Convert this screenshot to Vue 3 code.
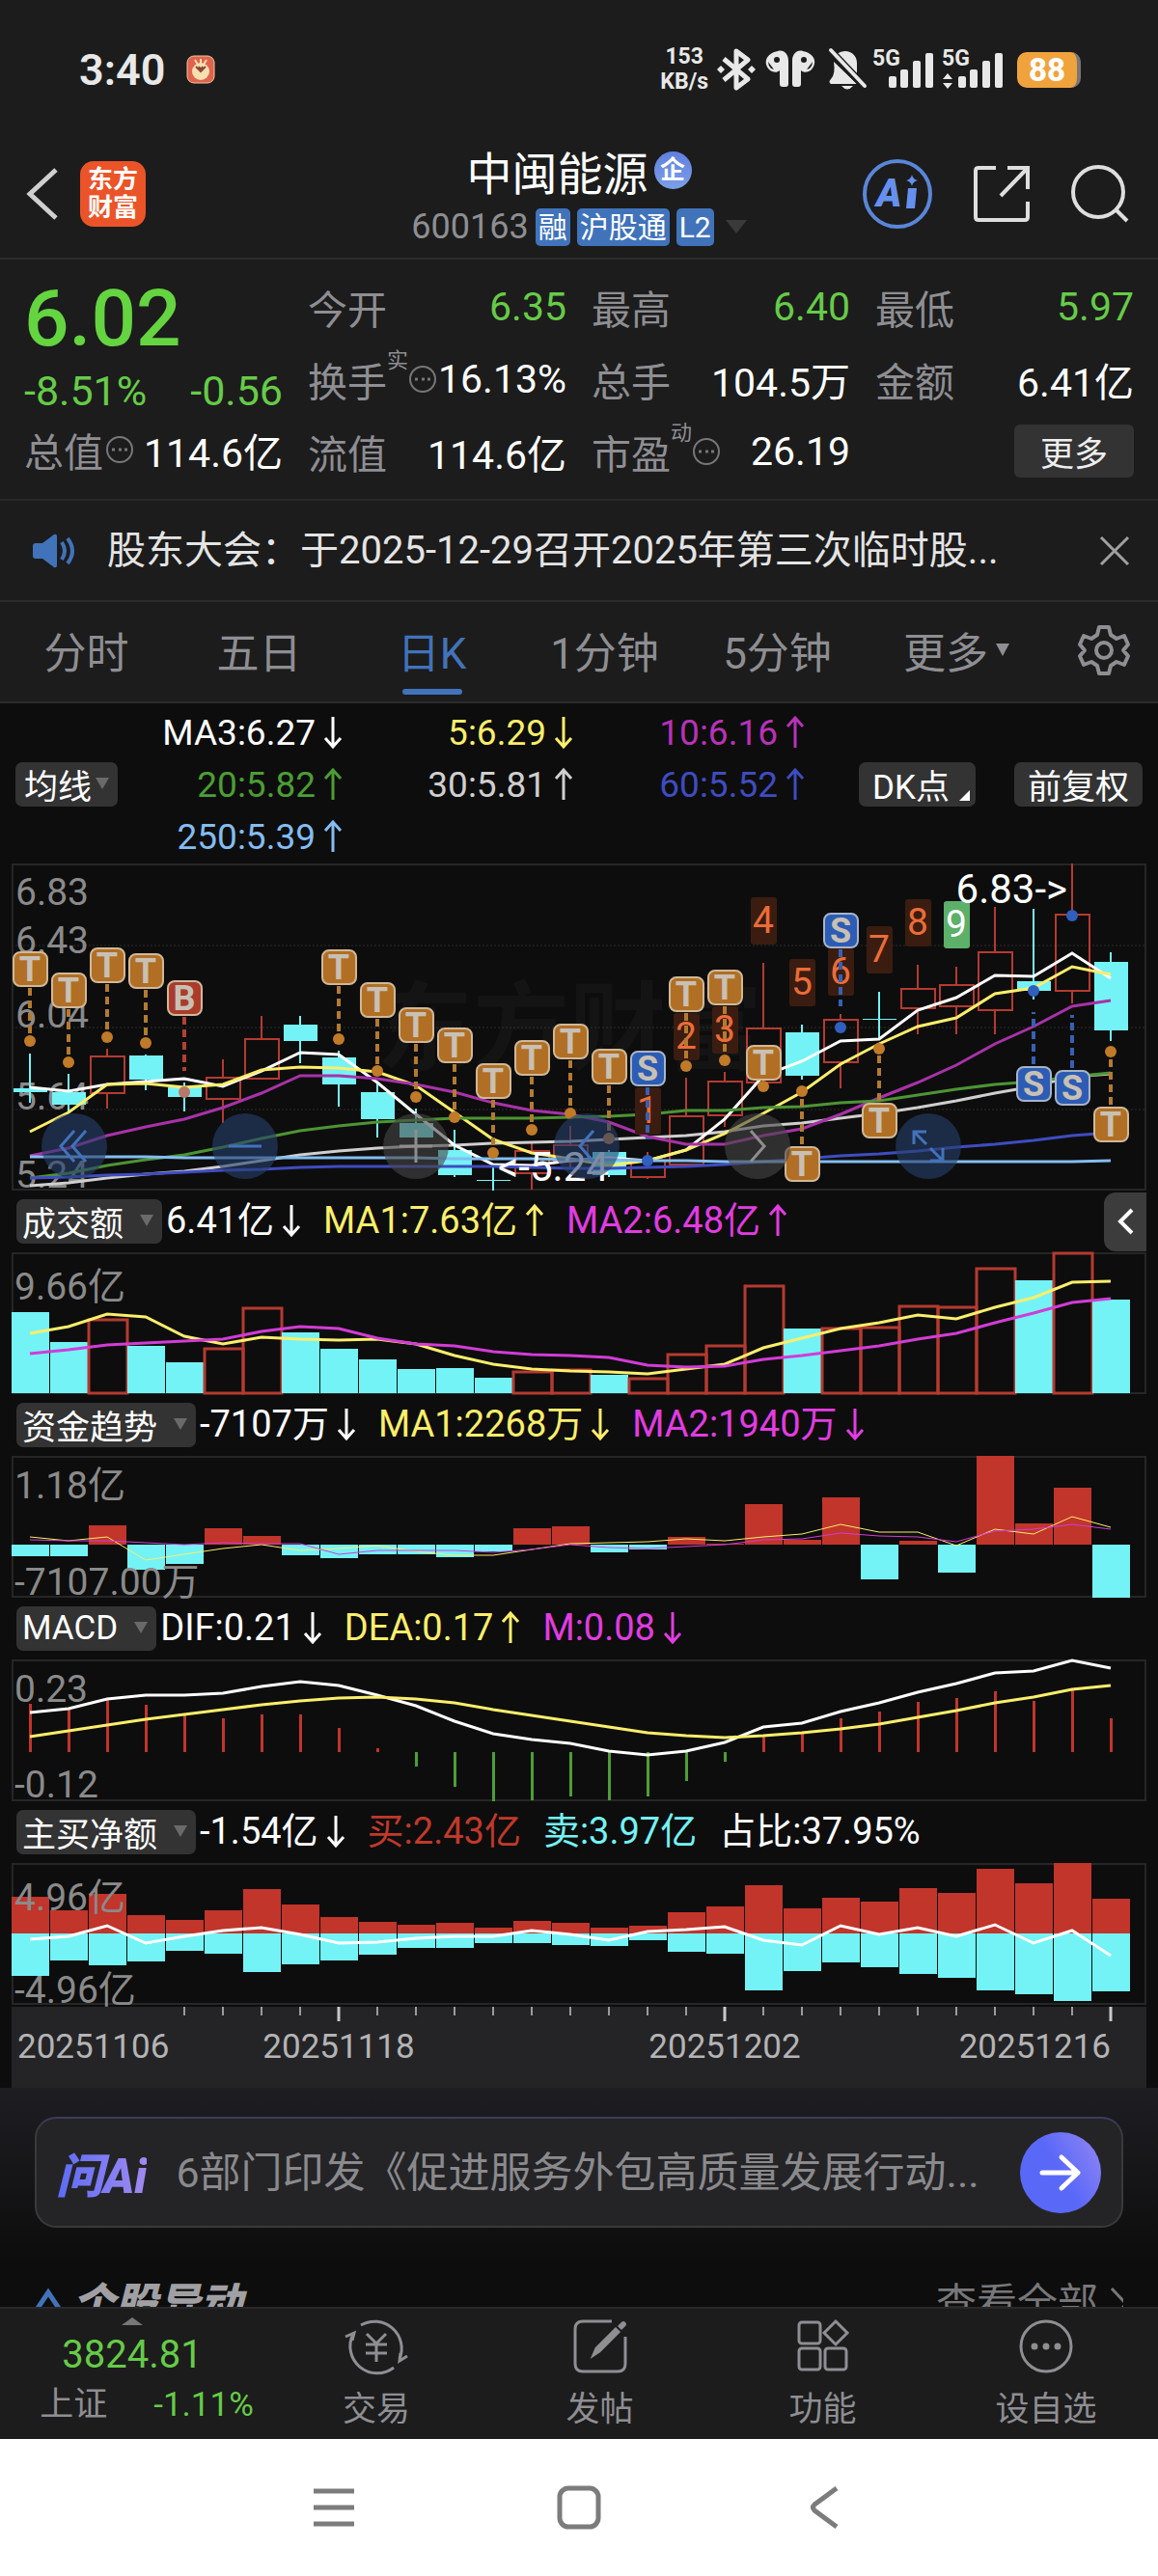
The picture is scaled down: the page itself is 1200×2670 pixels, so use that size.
<template>
  <div class="app">
    <header class="top">
      <div class="status-bar">
        <span class="clock">3:40</span>
        <svg class="alarm" width="30" height="30" viewBox="0 0 30 30">
          <rect x="1" y="1" width="28" height="28" rx="7" fill="#e0634d" stroke="#f0c9a0" />
          <circle cx="15" cy="17" r="9" fill="#f7dfb0" />
          <path d="M9 5l3 5M21 5l-3 5M15 4v5" stroke="#f7dfb0" stroke-width="2" />
          <path d="M10 12l5 5 5-5M13 12l2 3 2-3" fill="none" stroke="#8a4a38" stroke-width="2" />
        </svg>
        <div class="status-right">
          <div class="net-speed"><span>153</span><span>KB/s</span></div>
          <svg width="40" height="44" viewBox="0 0 40 44">
            <path d="M7 11l25 21-12 9V3l12 9L7 33" fill="none" stroke="#e8e8e8" stroke-width="5" stroke-linejoin="round" />
            <path d="M0 22l4-4 4 4-4 4zM32 22l4-4 4 4-4 4z" fill="#e8e8e8" />
          </svg>
          <svg class="pods" width="52" height="40" viewBox="0 0 52 40">
            <g fill="#e8e8e8">
              <path d="M13 1c6-2 11 3 11 10v24q0 3-3 3h-3q-3 0-3-3V21c-3 3-8 2-11-1C-3 12 2 3 13 1z" />
              <path d="M39 1c-6-2-11 3-11 10v24q0 3 3 3h3q3 0 3-3V21c3 3 8 2 11-1 7-8 2-17-9-19z" />
            </g>
            <g fill="#1c1c1c">
              <circle cx="12" cy="10" r="3" />
              <circle cx="40" cy="10" r="3" />
              <path d="M3 12l6 8-3-1q-3-3-3-7zM49 12l-6 8 3-1q3-3 3-7z" />
            </g>
          </svg>
          <svg class="mute" width="40" height="44" viewBox="0 0 40 44">
            <path d="M9 6c10-7 21-1 21 9v13zM6 14l24 23H3q-3-2 0-5 5-5 3-18zM14 39h12q-6 7-12 0z" fill="#e8e8e8" />
            <path d="M2 2l36 38" stroke="#1c1c1c" stroke-width="8" />
            <path d="M3 2l35 37" stroke="#e8e8e8" stroke-width="4" stroke-linecap="round" />
          </svg>
          <svg v-for="n in 2" :key="n" class="signal" width="64" height="42" viewBox="0 0 64 42">
            <text x="0" y="17" font-size="23" font-weight="700" fill="#e8e8e8">5G</text>
            <g fill="#e8e8e8">
              <rect x="17" y="28" width="8" height="12" rx="2" />
              <rect x="29" y="21" width="8" height="19" rx="2" />
              <rect x="42" y="12" width="8" height="28" rx="2" />
              <rect x="55" y="4" width="8" height="36" rx="2" />
              <path v-if="n === 2" d="M1 31l5-6 5 6zM1 35l5 6 5-6z" />
            </g>
          </svg>
          <div class="battery"><span>88</span></div>
        </div>
      </div>

      <div class="title-bar">
        <div class="title-left">
          <button type="button" class="plain" aria-label="返回">
            <svg width="34" height="56" viewBox="0 0 34 56">
              <path d="M31 3L4 28l27 25" fill="none" stroke="#cfcfcf" stroke-width="5" />
            </svg>
          </button>
          <div class="brand"><span>东方</span><span>财富</span></div>
        </div>
        <div class="title-center">
          <h1 class="stock-name">中闽能源<span class="corp">企</span></h1>
          <div class="stock-sub">
            <span class="code">600163</span>
            <span v-for="tag in tags" :key="tag" class="tag">{{ tag }}</span>
            <svg class="sub-tri" width="22" height="14" viewBox="0 0 22 14"><path d="M0 0h22L11 14z" fill="#3a3a3a" /></svg>
          </div>
        </div>
        <div class="title-right">
          <button type="button" class="plain" aria-label="AI">
            <svg width="72" height="72" viewBox="0 0 72 72">
              <circle cx="36" cy="36" r="34" fill="none" stroke="#5a86d8" stroke-width="4" />
              <text x="14" y="49" font-size="40" font-weight="900" font-style="italic" fill="#6590ee">A</text>
              <path d="M47 30h9l-2 21h-9zM51 16q1 5 6 6-5 1-6 6-1-5-6-6 5-1 6-6z" fill="#6590ee" />
            </svg>
          </button>
          <button type="button" class="plain" aria-label="分享">
            <svg width="60" height="60" viewBox="0 0 60 60">
              <path d="M24 3H6Q3 3 3 6v48q0 3 3 3h48q3 0 3-3V38M36 3h21v22M57 3L29 32" fill="none" stroke="#dedede" stroke-width="4" />
            </svg>
          </button>
          <button type="button" class="plain" aria-label="搜索">
            <svg width="60" height="60" viewBox="0 0 60 60">
              <circle cx="28" cy="28" r="26" fill="none" stroke="#dedede" stroke-width="4" />
              <path d="M46 46l12 12" stroke="#dedede" stroke-width="4" />
            </svg>
          </button>
        </div>
      </div>
    </header>

    <section class="quote">
      <div class="quote-main">
        <div class="price">6.02</div>
        <div class="change"><span>-8.51%</span><span>-0.56</span></div>
        <div class="stat total">
          <span class="label">总值</span>
          <svg class="dots" width="30" height="30" viewBox="0 0 30 30"><use href="#more-dots" /></svg>
          <span class="value">114.6亿</span>
        </div>
      </div>
      <div class="quote-grid">
        <div v-for="s in stats" :key="s.label" class="stat">
          <span class="label">{{ s.label }}<sup v-if="s.sup">{{ s.sup }}</sup></span>
          <svg v-if="s.sup" class="dots" width="30" height="30" viewBox="0 0 30 30"><use href="#more-dots" /></svg>
          <span class="value" :class="{ down: s.down }">{{ s.value }}</span>
        </div>
        <div class="stat"><button type="button" class="more-btn">更多</button></div>
      </div>
    </section>

    <section class="notice">
      <svg width="46" height="36" viewBox="0 0 46 36">
        <path d="M3 10h7L22 1q3-1 3 2v30q0 3-3 2l-12-9H3q-3 0-3-3V13q0-3 3-3z" fill="#4173bb" />
        <path d="M30 9q6 9 0 18M36 5q10 13 0 26" fill="none" stroke="#4173bb" stroke-width="4" />
      </svg>
      <a href="#" class="notice-text">股东大会：于2025-12-29召开2025年第三次临时股...</a>
      <button type="button" class="plain" aria-label="关闭">
        <svg width="30" height="30" viewBox="0 0 30 30"><path d="M1 1l28 28M29 1L1 29" stroke="#a0a0a0" stroke-width="3" /></svg>
      </button>
    </section>

    <nav class="tabs">
      <button
        v-for="t in tabs"
        :key="t"
        type="button"
        class="tab"
        :class="{ active: activeTab === t }"
        @click="activeTab = t"
      >
        {{ t }}<svg v-if="t === '更多'" width="14" height="13" viewBox="0 0 14 13"><path d="M0 0h14L7 13z" fill="#8e8e93" /></svg>
      </button>
      <button type="button" class="tab" aria-label="设置">
        <svg width="52" height="52" viewBox="0 0 52 52">
          <path
            d="M21 2h10l2 8 6 4 8-3 4 9-5 6 5 6-4 9-8-3-6 4-2 8H21l-2-8-6-4-8 3-4-9 5-6-5-6 4-9 8 3 6-4z"
            fill="none" stroke="#8e8e93" stroke-width="4" stroke-linejoin="round"
          />
          <circle cx="26" cy="26" r="8" fill="none" stroke="#8e8e93" stroke-width="4" />
        </svg>
      </button>
    </nav>

    <main class="charts">
      <div class="ma-legend">
        <button type="button" class="chip ma-chip">均线<svg width="14" height="12" viewBox="0 0 14 12"><path d="M0 0h14L7 12z" fill="#6a6a6a" /></svg></button>
        <div class="ma-values">
          <span v-for="m in maLegend" :key="m.text" :class="m.color">
            {{ m.text }}<svg class="arrow" width="20" height="34" viewBox="0 0 20 34"><use :href="m.up ? '#arrow-up' : '#arrow-down'" /></svg>
          </span>
        </div>
        <div class="ma-actions">
          <button type="button" class="chip dk">DK点<svg width="11" height="11" viewBox="0 0 11 11"><path d="M11 0v11H0z" fill="#fff" /></svg></button>
          <button type="button" class="chip">前复权</button>
        </div>
      </div>

      <div class="main-chart">
        <svg class="pane" viewBox="0 0 1176 339">
          <rect x="1" y="1" width="1174" height="337" class="frame" />
          <text x="578" y="206" class="watermark" text-anchor="middle">东方财富</text>
          <path d="M0 85h1176M0 170h1176M0 255h1176" class="grid-line" />
          <text v-for="l in priceLabels" :key="l.text" x="4" :y="l.y" class="axis-text">{{ l.text }}</text>
          <g v-for="(c, i) in candles" :key="'c' + i" :class="c.up ? 'c-up' : 'c-down'">
            <line :x1="cx(i)" :x2="cx(i)" :y1="c.high" :y2="c.up ? c.top : c.low" />
            <line v-if="c.up" :x1="cx(i)" :x2="cx(i)" :y1="c.bottom" :y2="c.low" />
            <rect :x="cx(i) - 17" :y="c.top" width="35" :height="Math.max(c.bottom - c.top, 1)" />
          </g>
          <polyline v-for="m in maLines" :key="m.color" :points="m.points" class="ma-line" :class="'s-' + m.color" />
          <g v-for="n in countTags" :key="'n' + n.i" :class="n.n === 9 ? 'count last' : 'count'">
            <rect :x="cx(n.i) - 13" :y="n.y" width="27" height="49" rx="3" />
            <text :x="cx(n.i)" :y="n.y + 37" text-anchor="middle">{{ n.n }}</text>
          </g>
          <g v-for="m in marks" :key="'m' + m.i" :class="'mark mark-' + m.type">
            <line :x1="cx(m.i)" :x2="cx(m.i)" :y1="m.from" :y2="m.to" />
            <circle :cx="cx(m.i)" :cy="m.dot" r="6" />
            <rect :x="cx(m.i) - 17" :y="m.y - 17" width="35" height="35" rx="7" />
            <text :x="cx(m.i)" :y="m.y + 13" text-anchor="middle">{{ m.type }}</text>
          </g>
          <text x="1094" y="41" class="peak" text-anchor="end">6.83-&gt;</text>
          <text x="504" y="329" class="peak">&lt;-5.24</text>
        </svg>
        <div class="chart-tools">
          <button v-for="b in tools" :key="b.name" type="button" :aria-label="b.name" :class="{ gray: b.gray }">
            <svg width="40" height="40" viewBox="0 0 40 40"><path :d="b.d" /></svg>
          </button>
        </div>
      </div>

      <template v-for="p in panes" :key="p.name">
        <div class="pane-head">
          <button type="button" class="chip">{{ p.name }}<svg width="14" height="12" viewBox="0 0 14 12"><path d="M0 0h14L7 12z" fill="#6a6a6a" /></svg></button>
          <span v-for="v in p.values" :key="v.text" :class="v.color">
            {{ v.text }}<svg v-if="v.dir" class="arrow" width="20" height="34" viewBox="0 0 20 34"><use :href="'#arrow-' + v.dir" /></svg>
          </span>
          <button v-if="p.name === '成交额'" type="button" class="fold" aria-label="展开">
            <svg width="18" height="28" viewBox="0 0 18 28"><path d="M16 2L4 14l12 12" fill="none" stroke="#fff" stroke-width="4" /></svg>
          </button>
        </div>
        <svg class="pane" viewBox="0 0 1176 147">
          <rect x="1" y="1" width="1174" height="145" class="frame" />
          <rect
            v-for="(b, i) in p.bars"
            :key="i"
            :x="b.x"
            :y="b.y"
            :width="b.w"
            :height="b.h"
            :class="b.cls"
          />
          <text v-for="l in p.labels" :key="l.text" x="3" :y="l.y" class="axis-text">{{ l.text }}</text>
          <polyline
            v-for="l in p.lines"
            :key="l.color"
            :points="l.points"
            class="ma-line"
            :class="['s-' + l.color, { thin: p.thin }]"
          />
        </svg>
      </template>

      <svg class="axis" viewBox="0 0 1176 84">
        <rect width="1176" height="84" fill="#242427" />
        <line v-for="i in 25" :key="i" :x1="cx(i + 3)" :x2="cx(i + 3)" y1="0" :y2="(i + 3) % 10 === 8 ? 15 : 9" :class="{ major: (i + 3) % 10 === 8 }" />
        <text x="6" y="53">20251106</text>
        <text x="339" y="53" text-anchor="middle">20251118</text>
        <text x="739" y="53" text-anchor="middle">20251202</text>
        <text x="1139" y="53" text-anchor="end">20251216</text>
      </svg>
    </main>

    <section class="assistant">
      <form class="ask" @submit.prevent>
        <label for="ask-input" class="ask-logo">问Ai</label>
        <input id="ask-input" type="text" placeholder="6部门印发《促进服务外包高质量发展行动..." />
        <button type="submit" class="send" aria-label="发送">
          <svg width="44" height="40" viewBox="0 0 44 40"><path d="M3 20h37M23 4l17 16-17 16" fill="none" stroke="#fff" stroke-width="5" stroke-linecap="round" stroke-linejoin="round" /></svg>
        </button>
      </form>
      <div class="moves">
        <svg width="28" height="30" viewBox="0 0 28 30"><path d="M2 24L14 6l12 18" fill="none" stroke="#4173bb" stroke-width="5" /></svg>
        <h2>个股异动</h2>
        <a href="#">查看全部<svg width="20" height="36" viewBox="0 0 20 36"><path d="M2 2l15 16L2 34" fill="none" stroke="#77777a" stroke-width="3" /></svg></a>
      </div>
    </section>

    <nav class="bottom-bar">
      <button type="button" class="index">
        <svg width="22" height="8" viewBox="0 0 22 8"><path d="M11 0l11 8H0z" fill="#77777a" /></svg>
        <span class="index-value">3824.81</span>
        <span class="index-row"><span>上证</span><span class="down">-1.11%</span></span>
      </button>
      <button type="button" class="action">
        <svg width="68" height="60" viewBox="0 0 68 60">
          <path d="M18 8a28 28 0 0 1 40 35M52 52a28 28 0 0 1-42-35" />
          <path d="M2 20l9-4-2 8M66 40l-8 5 1-8" />
          <path d="M24 17l10 10 10-10M34 27v19M23 28h22M23 37h22" />
        </svg>
        <span>交易</span>
      </button>
      <button type="button" class="action">
        <svg width="60" height="60" viewBox="0 0 60 60">
          <path d="M42 4H12Q4 4 4 12v36q0 8 8 8h36q8 0 8-8V20" />
          <path d="M23 39l3-7 20-20 3 3-20 20zM50 9l3-3q1-1 2 0t0 2l-3 3z" class="solid" />
        </svg>
        <span>发帖</span>
      </button>
      <button type="button" class="action">
        <svg width="60" height="60" viewBox="0 0 60 60">
          <rect x="5" y="5" width="22" height="22" rx="3" />
          <rect x="5" y="32" width="22" height="22" rx="3" />
          <rect x="32" y="32" width="22" height="22" rx="3" />
          <path d="M43 4l12 12-12 12-12-12z" />
        </svg>
        <span>功能</span>
      </button>
      <button type="button" class="action">
        <svg width="60" height="60" viewBox="0 0 60 60">
          <circle cx="30" cy="30" r="26" />
          <g class="solid"><circle cx="18" cy="30" r="2" /><circle cx="30" cy="30" r="2" /><circle cx="42" cy="30" r="2" /></g>
        </svg>
        <span>设自选</span>
      </button>
    </nav>

    <footer class="system-nav">
      <button type="button" class="plain" aria-label="最近任务">
        <svg width="46" height="46" viewBox="0 0 46 46"><path d="M2 6h42M2 23h42M2 40h42" stroke="#7c7c7c" stroke-width="5" /></svg>
      </button>
      <button type="button" class="plain" aria-label="主屏幕">
        <svg width="46" height="46" viewBox="0 0 46 46"><rect x="3" y="3" width="40" height="40" rx="9" fill="none" stroke="#7c7c7c" stroke-width="5" /></svg>
      </button>
      <button type="button" class="plain" aria-label="返回上级">
        <svg width="46" height="46" viewBox="0 0 46 46"><path d="M36 3L13 20q-3 3 0 6l23 17" fill="none" stroke="#7c7c7c" stroke-width="5" /></svg>
      </button>
    </footer>

    <!-- shared symbols -->
    <svg class="defs" width="0" height="0">
      <g id="more-dots">
        <circle cx="15" cy="15" r="13" fill="none" stroke="#77777a" stroke-width="2" />
        <path d="M7 15h3M14 15h3M20 15h3" stroke="#77777a" stroke-width="3" />
      </g>
      <path id="arrow-up" d="M10 33V2M2 11l8-9 8 9" fill="none" stroke="currentColor" stroke-width="3" />
      <path id="arrow-down" d="M10 1v31M2 23l8 9 8-9" fill="none" stroke="currentColor" stroke-width="3" />
    </svg>
  </div>
</template>

<script setup>
import { ref } from 'vue';

const activeTab = ref('日K');
const tabs = ['分时', '五日', '日K', '1分钟', '5分钟', '更多'];
const tags = ['融', '沪股通', 'L2'];

const stats = [
  { label: '今开', value: '6.35', down: true },
  { label: '最高', value: '6.40', down: true },
  { label: '最低', value: '5.97', down: true },
  { label: '换手', sup: '实', value: '16.13%' },
  { label: '总手', value: '104.5万' },
  { label: '金额', value: '6.41亿' },
  { label: '流值', value: '114.6亿' },
  { label: '市盈', sup: '动', value: '26.19' }
];

const maLegend = [
  { text: 'MA3:6.27', color: 'white', up: false },
  { text: '5:6.29', color: 'yellow', up: false },
  { text: '10:6.16', color: 'purple', up: true },
  { text: '20:5.82', color: 'green', up: true },
  { text: '30:5.81', color: 'gray', up: true },
  { text: '60:5.52', color: 'blue', up: true },
  { text: '250:5.39', color: 'sky', up: true }
];

const tools = [
  { name: '最左', d: 'M20 4L6 20l14 16M32 4L18 20l14 16' },
  { name: '缩小', d: 'M3 20h34' },
  { name: '放大', gray: true, d: 'M3 20h34M20 3v34' },
  { name: '左移', d: 'M27 4L13 20l14 16' },
  { name: '右移', gray: true, d: 'M13 4l14 16-14 16' },
  { name: '全屏', d: 'M5 18V5h13M5 5l13 13M35 22v13H22M35 35L22 22' }
];

// series levels are kept at 3 units per chart pixel, measured from `base`
const toY = (v, base) => Math.round((v - base) / 3);
const cx = (i) => 19 + i * 40;
const line = (values, base) => values.map((v, i) => `${cx(i)},${toY(v, base)}`).join(' ');

const priceLabels = [
  { text: '6.83', y: 43 },
  { text: '6.43', y: 93 },
  { text: '6.04', y: 170 },
  { text: '5.64', y: 255 },
  { text: '5.24', y: 336 }
];

// [rising, high, body top, body bottom, low]
const candles = [
  [0, 197, 233, 237, 248], [0, 218, 237, 250, 258], [1, 192, 200, 238, 254], [0, 198, 199, 224, 235],
  [0, 227, 232, 242, 257], [1, 203, 222, 244, 269], [1, 158, 182, 223, 223], [0, 158, 167, 184, 207],
  [0, 194, 201, 229, 252], [0, 228, 237, 265, 284], [0, 254, 269, 284, 284], [0, 276, 297, 323, 325],
  [0, 313, 328, 329, 339], [1, 290, 298, 321, 338], [1, 272, 292, 309, 315], [0, 297, 299, 323, 325],
  [1, 299, 308, 325, 327], [1, 222, 262, 312, 312], [1, 216, 226, 261, 273], [1, 103, 171, 227, 232],
  [0, 167, 175, 220, 224], [1, 156, 162, 206, 233], [0, 133, 161, 162, 182], [1, 105, 130, 150, 177],
  [1, 107, 126, 148, 177], [1, 45, 92, 152, 177], [0, 47, 122, 132, 141], [1, 0, 53, 132, 145],
  [0, 92, 102, 173, 184]
].map(([up, high, top, bottom, low]) => ({ up: !!up, high, top, bottom, low }));

const maLines = [
  { color: 'gray', v: [1048, 1038, 1022, 1012, 1003, 988, 970, 950, 938, 930, 925, 922, 916, 912, 908, 902, 898, 890, 880, 862, 852, 838, 822, 803, 782, 758, 738, 708, 698] },
  { color: 'white', v: [740, 754, 733, 724, 713, 737, 690, 632, 638, 725, 825, 920, 982, 985, 970, 960, 968, 935, 840, 705, 660, 598, 590, 500, 463, 393, 396, 323, 403] },
  { color: 'yellow', v: [880, 820, 733, 728, 740, 732, 688, 678, 680, 692, 735, 820, 903, 945, 962, 985, 970, 935, 885, 822, 755, 670, 607, 552, 525, 450, 432, 366, 391] },
  { color: 'purple', v: [955, 930, 890, 865, 840, 805, 758, 706, 704, 714, 732, 757, 790, 812, 826, 850, 893, 919, 919, 892, 870, 825, 775, 725, 672, 605, 552, 488, 472] },
  { color: 'green', v: [1022, 1008, 985, 965, 950, 928, 900, 877, 861, 850, 842, 838, 838, 838, 835, 832, 825, 813, 812, 805, 800, 790, 782, 765, 748, 732, 722, 708, 697] },
  { color: 'blue', v: [1022, 1020, 1015, 1012, 1006, 1000, 996, 990, 987, 986, 986, 987, 988, 990, 992, 992, 990, 987, 980, 972, 964, 955, 948, 940, 928, 917, 905, 890, 883] },
  { color: 'sky', v: [958, 958, 958, 958, 959, 959, 959, 960, 960, 960, 961, 962, 963, 964, 965, 967, 970, 970, 971, 972, 972, 973, 973, 973, 973, 972, 972, 971, 970] }
].map((m) => ({ color: m.color, points: line(m.v, 45) }));

const countTags = [[16, 740], [17, 510], [18, 490], [19, 150], [20, 342], [21, 310], [22, 240], [23, 156], [24, 162]].map(
  ([i, y], k) => ({ i, n: k + 1, y: toY(y, 45) })
);

// [index, type, badge centre, dot]
const marks = [
  [0, 'T', 372, 597], [1, 'T', 438, 663], [2, 'T', 360, 585], [3, 'T', 378, 603], [4, 'B', 462, 757],
  [8, 'T', 366, 591], [9, 'T', 468, 691], [10, 'T', 546, 771], [11, 'T', 609, 833], [12, 'T', 720, 945],
  [13, 'T', 648, 873], [14, 'T', 597, 822], [15, 'T', 675, 900], [16, 'S', 681, 968], [17, 'T', 450, 675],
  [18, 'T', 429, 656], [19, 'T', 663, 738], [20, 'T', 978, 753], [21, 'S', 252, 555], [22, 'T', 843, 620],
  [26, 'S', 729, 442], [27, 'S', 741, 206], [28, 'T', 855, 630]
].map(([i, type, badge, d]) => {
  const y = toY(badge, 45);
  const dot = toY(d, 45);
  const dir = dot > y ? 1 : -1;
  // buy and sell guides stop short of the dot; index 27 shares its neighbour's length
  const gap = type === 'T' ? 0 : 22;
  const to = i === 27 ? 157 : dot - dir * gap;
  return { i, type, y, dot, from: y + dir * 20, to };
});

const hollow = [2, 5, 6, 13, 14, 16, 17, 18, 19, 21, 22, 23, 24, 25, 27];
const volumeBars = [390, 483, 411, 495, 546, 502, 376, 453, 504, 537, 567, 564, 594, 574, 568, 585, 594, 518, 491, 307, 441, 438, 434, 368, 371, 253, 291, 205, 351].map(
  (v, i) => {
    const y = toY(v, 204);
    return hollow.includes(i)
      ? { x: i * 40, y: y + 1, w: 40, h: 145 - y, cls: 'hollow' }
      : { x: i * 40, y, w: 39, h: 146 - y, cls: 'fill-cyan' };
  }
);

const zeroBars = (values, base, zero, w, neg) =>
  values.map((v, i) => {
    const y = toY(v, base);
    return {
      x: w > 10 ? i * 40 : cx(i) - 1,
      y: Math.min(y, zero),
      w,
      h: Math.max(Math.abs(zero - y), 1),
      cls: y > zero ? neg : 'fill-red'
    };
  });

const panes = [
  {
    name: '成交额',
    values: [
      { text: '6.41亿', color: 'white', dir: 'down' },
      { text: 'MA1:7.63亿', color: 'yellow', dir: 'up' },
      { text: 'MA2:6.48亿', color: 'magenta', dir: 'up' }
    ],
    labels: [{ text: '9.66亿', y: 49 }],
    bars: volumeBars,
    lines: [
      { color: 'yellow', points: line([455, 435, 396, 404, 465, 488, 468, 474, 478, 474, 490, 525, 552, 567, 573, 577, 582, 568, 552, 500, 470, 441, 422, 399, 411, 374, 344, 297, 293], 204) },
      { color: 'magenta', points: line([519, 507, 492, 486, 480, 474, 450, 435, 441, 471, 488, 495, 513, 521, 525, 530, 555, 560, 557, 537, 525, 511, 495, 474, 456, 422, 393, 360, 349], 204) }
    ]
  },
  {
    name: '资金趋势',
    thin: true,
    values: [
      { text: '-7107万', color: 'white', dir: 'down' },
      { text: 'MA1:2268万', color: 'yellow', dir: 'down' },
      { text: 'MA2:1940万', color: 'magenta', dir: 'down' }
    ],
    labels: [{ text: '1.18亿', y: 44 }, { text: '-7107.00万', y: 144 }],
    bars: zeroBars([490, 490, 394, 532, 513, 402, 427, 486, 495, 482, 482, 491, 475, 403, 396, 476, 468, 429, 450, 328, 437, 306, 560, 442, 540, 178, 386, 276, 617], 177, 92, 39, 'fill-cyan'),
    lines: [
      { color: 'yellow', points: line([429, 442, 430, 500, 482, 466, 454, 471, 465, 457, 475, 487, 486, 468, 450, 448, 443, 434, 442, 430, 421, 390, 415, 415, 457, 405, 420, 365, 399], 177) },
      { color: 'magenta', points: line([437, 441, 440, 448, 453, 448, 450, 450, 482, 470, 470, 470, 478, 468, 454, 462, 465, 460, 454, 439, 435, 417, 425, 430, 443, 412, 404, 390, 406], 177) }
    ]
  },
  {
    name: 'MACD',
    values: [
      { text: 'DIF:0.21', color: 'white', dir: 'down' },
      { text: 'DEA:0.17', color: 'yellow', dir: 'up' },
      { text: 'M:0.08', color: 'magenta', dir: 'down' }
    ],
    labels: [{ text: '0.23', y: 44 }, { text: '-0.12', y: 143 }],
    bars: zeroBars([318, 330, 306, 321, 350, 363, 351, 351, 393, 456, 513, 576, 620, 617, 605, 617, 605, 557, 497, 418, 408, 363, 342, 312, 300, 279, 309, 276, 363], 180, 96, 3, 'fill-green'),
    lines: [
      { color: 'white', points: line([345, 333, 302, 291, 291, 285, 263, 248, 261, 290, 325, 372, 410, 429, 441, 465, 477, 465, 438, 390, 378, 342, 315, 282, 254, 222, 216, 182, 206], 180) },
      { color: 'yellow', points: line([420, 402, 384, 367, 352, 336, 321, 309, 300, 297, 303, 315, 336, 354, 372, 390, 408, 417, 423, 417, 408, 397, 381, 360, 339, 315, 297, 273, 261], 180) }
    ]
  },
  {
    name: '主买净额',
    values: [
      { text: '-1.54亿', color: 'white', dir: 'down' },
      { text: '买:2.43亿', color: 'red' },
      { text: '卖:3.97亿', color: 'cyan' },
      { text: '占比:37.95%', color: 'white' }
    ],
    labels: [{ text: '4.96亿', y: 49 }, { text: '-4.96亿', y: 145 }],
    bars: [
      ...zeroBars([288, 331, 279, 346, 361, 331, 265, 313, 351, 366, 375, 370, 384, 364, 370, 385, 378, 337, 319, 251, 324, 292, 304, 260, 276, 200, 247, 183, 295], 183, 73, 39, 'fill-cyan'),
      ...zeroBars([534, 486, 501, 489, 456, 466, 522, 497, 486, 467, 447, 446, 431, 432, 439, 441, 423, 459, 466, 578, 519, 491, 506, 527, 539, 578, 590, 612, 581], 183, 73, 39, 'fill-cyan')
    ],
    lines: [
      { color: 'white', points: line([420, 412, 377, 431, 411, 393, 384, 406, 432, 428, 417, 412, 410, 394, 405, 423, 397, 390, 381, 424, 439, 379, 405, 383, 411, 375, 433, 392, 470], 183) }
    ]
  }
];
</script>

<style>
body {
  margin: 0;
  background: #0d0d0d;
}
</style>

<style scoped>
.app {
  font-family: Roboto, "Noto Sans CJK SC", sans-serif;
  background: #0d0d0d;
  color: #fff;
  overflow: hidden;
}

button {
  padding: 0;
  border: none;
  background: transparent;
  color: inherit;
  font-family: inherit;
  cursor: pointer;
}

a {
  color: inherit;
  text-decoration: none;
}

svg {
  flex-shrink: 0;
  overflow: visible;
}

.plain {
  display: flex;
}

.defs {
  display: block;
}

.top {
  background: #1c1c1c;
  border-bottom: 2px solid #2c2c2e;
}

.status-bar {
  display: flex;
  align-items: center;
  height: 144px;
  padding: 0 80px 0 82px;
  color: #e8e8e8;
}

.clock {
  font-size: 45px;
  font-weight: 600;
}

.alarm {
  margin-left: 22px;
}

.status-right {
  display: flex;
  align-items: center;
  margin-left: auto;
}

.net-speed {
  display: flex;
  flex-direction: column;
  align-items: center;
  margin-right: 9px;
  font-size: 23px;
  font-weight: 700;
  line-height: 26px;
}

.pods {
  margin-left: 10px;
}

.mute {
  margin-left: 13px;
}

.signal {
  margin-left: 6px;
}

.signal + .signal {
  margin-left: 8px;
}

.battery {
  display: flex;
  align-items: center;
  justify-content: center;
  width: 62px;
  height: 37px;
  margin-left: 14px;
  border-right: 4px solid #777;
  border-radius: 10px;
  background: #f0a33d;
  color: #fff;
  font-size: 33px;
  font-weight: 800;
}

.title-bar {
  display: grid;
  grid-template-columns: 1fr auto 1fr;
  align-items: center;
  height: 114px;
  padding-bottom: 9px;
}

.title-left {
  display: flex;
  align-items: center;
  gap: 22px;
  padding-left: 27px;
}

.brand {
  display: flex;
  flex-direction: column;
  justify-content: center;
  width: 68px;
  height: 68px;
  border-radius: 14px;
  background: #ea5428;
  font-size: 26px;
  font-weight: 700;
  line-height: 29px;
  text-align: center;
}

.stock-name {
  display: flex;
  align-items: center;
  justify-content: center;
  gap: 6px;
  height: 60px;
  margin: 0;
  font-size: 47px;
  font-weight: 400;
}

.corp {
  width: 39px;
  height: 39px;
  border-radius: 50%;
  background: linear-gradient(#5f80e0, #7c9fe8);
  font-size: 26px;
  font-weight: 700;
  line-height: 38px;
  text-align: center;
}

.stock-sub {
  display: flex;
  align-items: center;
  justify-content: center;
  gap: 7px;
  margin-top: 8px;
}

.code {
  color: #8e8e93;
  font-size: 36px;
}

.tag {
  padding: 0 3px;
  border-radius: 5px;
  background: #4173bb;
  font-size: 30px;
  line-height: 39px;
}

.sub-tri {
  margin-left: 5px;
}

.title-right {
  display: flex;
  align-items: center;
  justify-content: flex-end;
  gap: 42px;
  padding-right: 30px;
}

.quote {
  display: grid;
  grid-template-columns: 268fr 856fr;
  gap: 26px;
  padding: 11px 25px 12px;
  background: #1c1c1c;
  border-bottom: 2px solid #28282a;
}

.price {
  height: 94px;
  color: #64d440;
  font-size: 82px;
  font-weight: 500;
  line-height: 100px;
}

.change {
  display: flex;
  justify-content: space-between;
  height: 60px;
  color: #66cb48;
  font-size: 43px;
  line-height: 62px;
}

.quote-grid {
  display: grid;
  grid-template-columns: repeat(3, 1fr);
  grid-auto-rows: 75px;
  column-gap: 26px;
}

.stat {
  display: flex;
  align-items: center;
  white-space: nowrap;
}

.stat.total {
  height: 64px;
}

.label {
  display: flex;
  color: #8e8e93;
  font-size: 41px;
}

.label sup {
  font-size: 22px;
  line-height: 22px;
}

.dots {
  margin-left: 2px;
}

.label:has(sup) + .dots {
  margin-left: 0;
}

.value {
  margin-left: auto;
  font-size: 41px;
}

.down {
  color: #66cb48;
}

.more-btn {
  width: 124px;
  height: 55px;
  margin-left: auto;
  border-radius: 6px;
  background: #333;
  color: #eee;
  font-size: 35px;
}

.notice {
  display: flex;
  align-items: center;
  height: 103px;
  padding: 0 30px 0 34px;
  background: #1c1c1c;
  border-bottom: 2px solid #2c2c2e;
}

.notice-text {
  flex: 1;
  margin-left: 31px;
  color: #e4e4e4;
  font-size: 40px;
  line-height: 60px;
  white-space: nowrap;
}

.tabs {
  display: grid;
  grid-template-columns: repeat(5, 179fr) 192fr 113fr;
  height: 103px;
  background: #1c1c1c;
  border-bottom: 2px solid #2c2c2e;
}

.tab {
  position: relative;
  display: flex;
  align-items: center;
  justify-content: center;
  gap: 8px;
  padding-bottom: 4px;
  color: #8e8e93;
  font-size: 44px;
}

.tab.active {
  color: #4173bb;
}

.tab.active::after {
  content: '';
  position: absolute;
  bottom: 7px;
  width: 62px;
  height: 6px;
  border-radius: 3px;
  background: #4173bb;
}

.charts {
  padding: 0 12px;
}

.chip {
  display: flex;
  align-items: center;
  gap: 17px;
  height: 46px;
  padding: 0 9px 2px 6px;
  border-radius: 7px;
  background: #333;
  font-size: 35px;
  white-space: nowrap;
}

.ma-legend {
  display: grid;
  grid-template-columns: 112fr 710fr 354fr;
  align-items: center;
  padding: 3px 0 1px;
}

.ma-chip {
  justify-self: start;
  gap: 4px;
  margin-left: 4px;
  padding: 0 9px 2px;
}

.ma-values {
  display: grid;
  grid-template-columns: 231fr 239fr 240fr;
  grid-auto-rows: 54px;
  justify-items: end;
}

.ma-values span,
.pane-head span {
  display: flex;
  align-items: center;
  font-size: 37px;
  white-space: nowrap;
}

.arrow {
  margin-left: 8px;
}

.ma-actions {
  display: flex;
  justify-content: flex-end;
  gap: 40px;
  padding-right: 4px;
}

.ma-actions .chip {
  padding: 0 14px 2px;
}

.ma-actions .dk {
  gap: 10px;
  padding: 0 6px 2px 14px;
}

.dk svg {
  align-self: flex-end;
  margin-bottom: 4px;
}

.white { color: #fff; }
.yellow { color: #fbee6b; }
.purple { color: #b832b8; }
.magenta { color: #e23ce2; }
.green { color: #4c9e34; }
.gray { color: #cfcfcf; }
.blue { color: #3f4cc0; }
.sky { color: #83bdf2; }
.red { color: #c0392b; }
.cyan { color: #74f3f6; }

.main-chart {
  position: relative;
}

.pane,
.axis {
  display: block;
  width: 100%;
}

.frame {
  fill: none;
  stroke: #262626;
  stroke-width: 2;
}

.grid-line {
  stroke: #2c2c2c;
  stroke-dasharray: 2 2;
}

.watermark {
  fill: #141414;
  font-size: 100px;
  font-weight: 700;
}

.axis-text {
  fill: #8a8a8a;
  font-size: 39px;
}

.c-up line,
.c-up rect {
  fill: none;
  stroke: #b53a30;
  stroke-width: 2;
}

.c-down line {
  stroke: #74f3f6;
  stroke-width: 2;
}

.c-down rect {
  fill: #74f3f6;
}

.ma-line {
  fill: none;
  stroke-width: 3;
}

.ma-line.thin {
  stroke-width: 1;
}

.s-white { stroke: #fff; }
.s-yellow { stroke: #fbee6b; }
.s-purple { stroke: #a832a8; }
.s-magenta { stroke: #d23cd6; }
.s-green { stroke: #4c9434; }
.s-gray { stroke: #cfcfcf; }
.s-blue { stroke: #3f4cc0; }
.s-sky { stroke: #83bdf2; }

.count rect {
  fill: #3a1d10;
}

.count text {
  fill: #ec6c38;
  font-size: 39px;
}

.count.last rect {
  fill: #5cb06a;
}

.count.last text {
  fill: #fff;
}

.mark line {
  stroke-width: 4;
  stroke-dasharray: 8 5;
}

.mark rect {
  stroke: #d0b898;
  stroke-width: 2;
}

.mark text {
  fill: #c8c0b4;
  font-size: 36px;
  font-weight: 700;
}

.mark-T line { stroke: #b37a30; }
.mark-T circle { fill: #c07a28; }
.mark-T rect { fill: #b06f24; }
.mark-B line { stroke: #b5402f; }
.mark-B circle { fill: #b87868; }
.mark-B rect { fill: #ab3c2c; }
.mark-S line { stroke: #3560b4; }
.mark-S circle { fill: #305fc0; }
.mark-S rect { fill: #2c5cb4; stroke: #a8b4c8; }

.peak {
  fill: #fff;
  font-size: 42px;
}

.chart-tools {
  position: absolute;
  bottom: 12px;
  left: 0;
  right: 0;
  display: flex;
  justify-content: space-between;
  padding: 0 192px 0 31px;
}

.chart-tools button {
  display: flex;
  align-items: center;
  justify-content: center;
  width: 68px;
  height: 68px;
  border-radius: 50%;
  background: rgba(38, 64, 108, 0.6);
}

.chart-tools .gray {
  background: rgba(70, 70, 70, 0.6);
}

.chart-tools path {
  fill: none;
  stroke: #4173bb;
  stroke-width: 3;
}

.chart-tools .gray path {
  stroke: #8e8e8e;
}

.pane-head {
  display: flex;
  align-items: center;
  gap: 23px;
  height: 64px;
  padding-left: 5px;
}

.pane-head span {
  font-size: 38px;
  line-height: 46px;
  padding-bottom: 2px;
}

.pane-head .chip + span {
  margin-left: -19px;
}

.fold {
  display: flex;
  align-items: center;
  justify-content: center;
  width: 44px;
  height: 61px;
  margin-left: auto;
  border-radius: 12px 0 0 12px;
  background: #3c3c3c;
}

.hollow {
  fill: none;
  stroke: #b53a30;
  stroke-width: 3;
}

.fill-cyan { fill: #74f3f6; }
.fill-red { fill: #c1352b; }
.fill-green { fill: #4c9e34; }

.axis {
  margin-top: 2px;
}

.axis line {
  stroke: #9a9a9a;
  stroke-width: 2;
}

.axis line.major {
  stroke: #c8c8c8;
  stroke-width: 3;
}

.axis text {
  fill: #b4b4b4;
  font-size: 35px;
}

.assistant {
  padding: 30px 36px 0;
  background: linear-gradient(#1e1d22, #0d0d0d 80%);
}

.ask {
  display: flex;
  align-items: center;
  height: 111px;
  padding: 0 21px 0 20px;
  border: 2px solid #3a3a3d;
  border-top-color: #3c3c60;
  border-radius: 22px;
  background: #242427;
}

.ask-logo {
  background: linear-gradient(90deg, #5b6bf5, #a08af0);
  background-clip: text;
  color: transparent;
  font-size: 49px;
  font-style: italic;
  font-weight: 900;
}

.ask input {
  flex: 1;
  min-width: 0;
  margin-left: 30px;
  padding: 0;
  border: none;
  outline: none;
  background: transparent;
  color: #fff;
  font-family: inherit;
  font-size: 43px;
}

.ask input::placeholder {
  color: #8a8a8d;
}

.send {
  display: flex;
  align-items: center;
  justify-content: center;
  width: 84px;
  height: 84px;
  border-radius: 50%;
  background: linear-gradient(60deg, #5a68f8 50%, #9488f4);
}

.moves {
  display: flex;
  align-items: flex-start;
  height: 27px;
  margin-top: 55px;
  overflow: hidden;
  color: #8a8a8d;
}

.moves svg {
  margin-top: 6px;
}

.moves h2 {
  margin: 0 0 0 11px;
  color: #a0a0a4;
  font-size: 44px;
  font-style: italic;
  font-weight: 900;
  line-height: 48px;
}

.moves a {
  display: flex;
  gap: 12px;
  margin-left: auto;
  margin-right: -6px;
  color: #77777a;
  font-size: 42px;
  line-height: 48px;
}

.bottom-bar {
  display: grid;
  grid-template-columns: 274fr 232fr 231fr 231fr 232fr;
  height: 135px;
  border-top: 2px solid #28282a;
  background: #1c1c1c;
}

.index,
.action {
  display: flex;
  flex-direction: column;
  align-items: center;
}

.index {
  padding-top: 9px;
  color: #8e8e93;
}

.index-value {
  height: 60px;
  color: #66cb48;
  font-size: 40px;
  line-height: 62px;
}

.index-row {
  display: flex;
  gap: 48px;
  padding-left: 30px;
  font-size: 35px;
  line-height: 46px;
}

.action {
  gap: 12px;
  padding-top: 9px;
  color: #8e8e93;
  font-size: 35px;
  line-height: 48px;
}

.action svg {
  fill: none;
  stroke: #8e8e93;
  stroke-width: 3;
}

.action .solid {
  fill: #8e8e93;
}

.system-nav {
  display: flex;
  justify-content: center;
  gap: 208px;
  padding: 48px 0;
  background: #fff;
}
</style>
